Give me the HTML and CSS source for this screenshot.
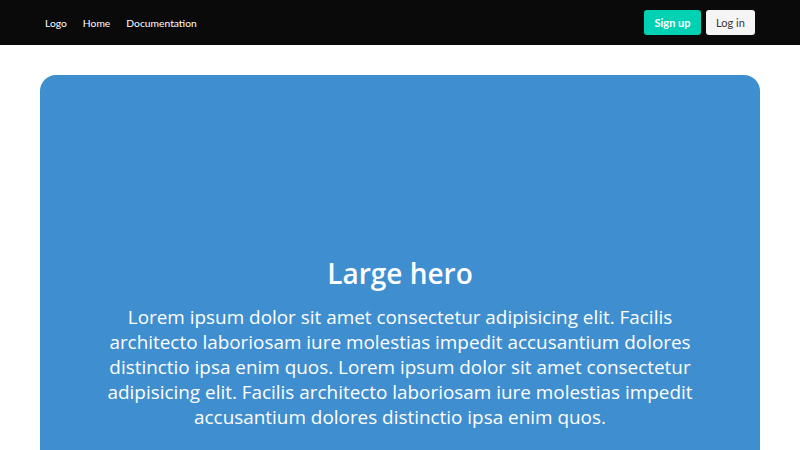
FILE: index.html
```html
<!DOCTYPE html>
<html>
<head>
<meta charset="utf-8">
<link rel="stylesheet" href="styles.css">
</head>
<body>
<nav class="navbar">
  <div class="nav-left">
    <a class="nav-item" href="#">Logo</a>
    <a class="nav-item" href="#">Home</a>
    <a class="nav-item" href="#">Documentation</a>
  </div>
  <div class="nav-right">
    <a class="btn btn-primary" href="#">Sign up</a>
    <a class="btn btn-light" href="#">Log in</a>
  </div>
</nav>
<main class="page">
  <section class="hero">
    <h1 class="hero-title">Large hero</h1>
    <p class="hero-text">Lorem ipsum dolor sit amet consectetur adipisicing elit. Facilis architecto laboriosam iure molestias impedit accusantium dolores distinctio ipsa enim quos. Lorem ipsum dolor sit amet consectetur adipisicing elit. Facilis architecto laboriosam iure molestias impedit accusantium dolores distinctio ipsa enim quos.</p>
  </section>
</main>
</body>
</html>
```
FILE: styles.css
```css
html, body {
  margin: 0;
  padding: 0;
  background: #ffffff;
  font-family: "Open Sans", "Noto Sans", sans-serif;
  overflow: hidden;
  height: 450px;
}
.navbar {
  height: 45px;
  background: #0a0a0a;
  display: flex;
  align-items: center;
  justify-content: space-between;
  padding: 0 45px;
  box-sizing: border-box;
  font-family: Lato, "Open Sans", sans-serif;
}
.nav-left {
  display: flex;
  gap: 16px;
}
.nav-item {
  color: #ffffff;
  text-decoration: none;
  font-size: 10.3px;
}
.nav-right {
  display: flex;
  gap: 5px;
}
.btn {
  display: flex;
  align-items: center;
  justify-content: center;
  height: 25px;
  border-radius: 3px;
  font-size: 11px;
  text-decoration: none;
  box-sizing: border-box;
}
.btn-primary {
  width: 57px;
  background: #00d1b2;
  color: #ffffff;
  font-weight: 700;
}
.btn-light {
  width: 49px;
  background: #f5f5f5;
  color: #363636;
}
.page {
  padding: 30px 40px 0;
}
.hero {
  background: #3e8ed0;
  border-radius: 16px;
  height: 420px;
  display: flex;
  flex-direction: column;
  align-items: center;
  padding-top: 178px;
  box-sizing: border-box;
  color: #ffffff;
  text-align: center;
}
.hero-title {
  margin: 0;
  font-size: 28px;
  font-weight: 600;
  line-height: 40px;
}
.hero-text {
  margin: 12px 0 0;
  width: 620px;
  font-size: 18.9px;
  line-height: 25px;
}
```
